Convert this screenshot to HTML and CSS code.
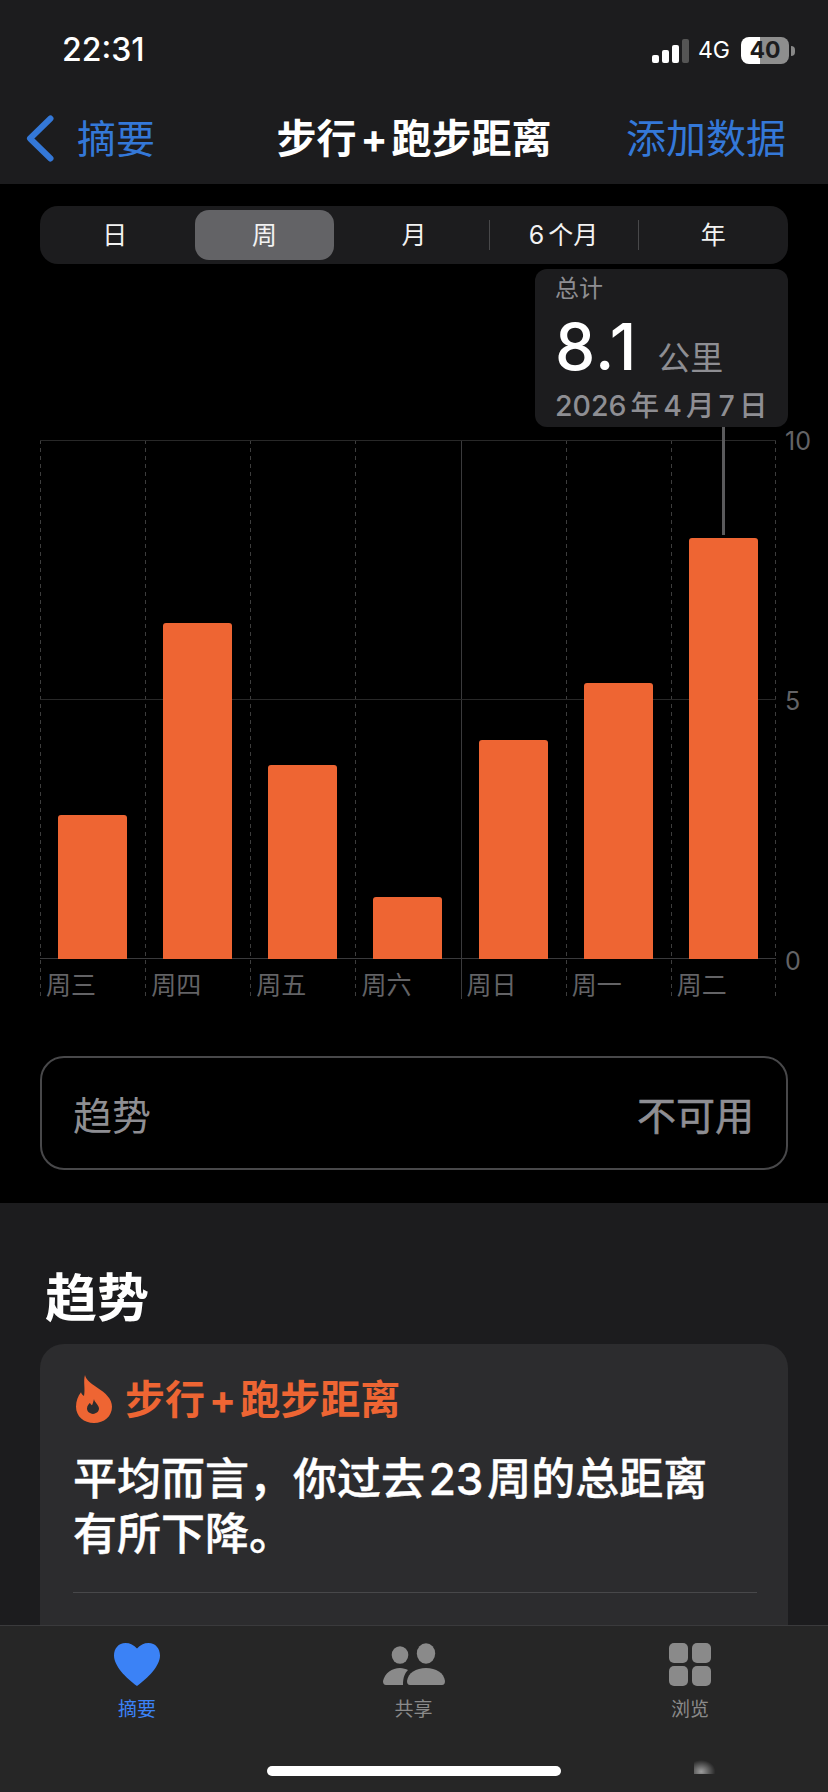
FILE: index.html
```html
<!DOCTYPE html>
<html>
<head>
    <title>步行+跑步距离</title>
    <link rel="stylesheet" href="styles.css">
</head>
<body>
    <div class="phone">
        <div class="top-bar">
            <div class="status">
                <span class="time">22:31</span>
                <div class="status-right">
                    <div class="signal">
                        <span class="sig sig-1"></span>
                        <span class="sig sig-2"></span>
                        <span class="sig sig-3"></span>
                        <span class="sig sig-4"></span>
                    </div>
                    <span class="network">4G</span>
                    <span class="battery">40</span>
                </div>
            </div>
            <div class="nav">
                <div class="nav-back">
                    <svg class="chevron" width="28" height="47" viewBox="0 0 28 47"><polyline points="24.5,3.5 4,23.5 24.5,43.5" fill="none" stroke="#3478d8" stroke-width="6" stroke-linecap="round" stroke-linejoin="round"/></svg>
                    <span class="nav-text">摘要</span>
                </div>
                <div class="nav-title nav-text">步行<span class="plus">+</span>跑步距离</div>
                <div class="nav-action nav-text">添加数据</div>
            </div>
        </div>

        <div class="chart-section">
            <div class="segment">
                <div class="seg-item">日</div>
                <div class="seg-item selected">周</div>
                <div class="seg-item">月</div>
                <div class="seg-sep"></div>
                <div class="seg-item">6 个月</div>
                <div class="seg-sep"></div>
                <div class="seg-item">年</div>
            </div>

            <div class="chart">
                <div class="days">
                    <div class="day"><div class="plot"><div class="bar" style="height: 27.7%"></div></div><div class="day-label">周三</div></div>
                    <div class="day"><div class="plot"><div class="bar" style="height: 64.7%"></div></div><div class="day-label">周四</div></div>
                    <div class="day"><div class="plot"><div class="bar" style="height: 37.4%"></div></div><div class="day-label">周五</div></div>
                    <div class="day"><div class="plot"><div class="bar" style="height: 11.9%"></div></div><div class="day-label">周六</div></div>
                    <div class="day day-sun"><div class="plot"><div class="bar" style="height: 42.2%"></div></div><div class="day-label">周日</div></div>
                    <div class="day"><div class="plot"><div class="bar" style="height: 53.2%"></div></div><div class="day-label">周一</div></div>
                    <div class="day"><div class="plot"><div class="bar" style="height: 81.1%"></div></div><div class="day-label">周二</div></div>
                </div>
                <div class="axis">
                    <span>10</span>
                    <span>5</span>
                    <span>0</span>
                </div>
                <div class="tooltip">
                    <div class="tip-label">总计</div>
                    <div class="tip-value"><span class="tip-num">8.1</span><span class="tip-unit">公里</span></div>
                    <div class="tip-date">2026 年 4 月 7 日</div>
                </div>
                <div class="tip-line"></div>
            </div>

            <div class="trend-box">
                <span>趋势</span>
                <span class="trend-value">不可用</span>
            </div>
        </div>

        <div class="trends">
            <h2>趋势</h2>
            <div class="card">
                <div class="card-head">
                    <svg width="36" height="48" viewBox="0 0 36 50" preserveAspectRatio="none"><path fill="#ee6533" fill-rule="evenodd" d="M9 0C10 5 14 8 21 13C30 19 36 25 36 33C36 43 28 50 18 50C8 50 0 43 0 33C0 27 2 22 5 18C5.5 20 6.5 21 8 22C9.5 14 7 7 9 0ZM18 25C18 28 23 31 23 35C23 38 20.5 40.5 17 40.5C13.5 40.5 11 38 11 35C11 32 13 30.5 14 29C14.5 30.5 15 31 16 31.5C17 29.5 17.5 27 18 25Z"/></svg>
                    <span class="card-title">步行<span class="plus">+</span>跑步距离</span>
                </div>
                <p class="card-text">平均而言，你过去 23 周的总距离<br>有所下降。</p>
                <div class="card-line"></div>
            </div>
        </div>

        <div class="tab-bar">
            <div class="tabs">
                <div class="tab active">
                    <svg width="46" height="44" viewBox="0 0 46 44"><path fill="#3b82f6" d="M23 5.5C20 2 16 0 11.5 0C4.5 0 0 5.5 0 12.5C0 23 12 35 23 43C34 35 46 23 46 12.5C46 5.5 41.5 0 34.5 0C30 0 26 2 23 5.5Z"/></svg>
                    <span>摘要</span>
                </div>
                <div class="tab">
                    <svg width="62" height="44" viewBox="0 0 62 44"><g fill="#8a8a8a"><ellipse cx="17" cy="12" rx="8.3" ry="8.8"/><ellipse cx="43" cy="10.5" rx="9.2" ry="10.3"/><path d="M0 38C2 30 9 25 17 25C20 25 23 26 25 27C22 30 20 34 20 42L3 42Q0 42 0 38Z"/><path d="M24 38C25 30 33 25 43 25C53 25 61 30 62 38Q62 42 59 42L27 42Q24 42 24 38Z"/></g></svg>
                    <span>共享</span>
                </div>
                <div class="tab">
                    <svg width="42" height="44" viewBox="0 0 42 44"><g fill="#8a8a8a"><rect x="0" y="0" width="19" height="20" rx="5"/><rect x="23" y="0" width="19" height="20" rx="5"/><rect x="0" y="23" width="19" height="20" rx="5"/><rect x="23" y="23" width="19" height="20" rx="5"/></g></svg>
                    <span>浏览</span>
                </div>
            </div>
            <div class="home-bar"></div>
            <div class="smudge"></div>
        </div>
    </div>
</body>
</html>
```

FILE: styles.css
```css
body {
    margin: 0;
    background: #000;
    font-family: "Inter", "Noto Sans CJK SC", sans-serif;
    color: #fff;
}
.phone {
    position: relative;
    width: 828px;
    height: 1792px;
    overflow: hidden;
    background: #000;
}
.top-bar {
    height: 184px;
    background: #1c1c1e;
}
.status {
    display: flex;
    justify-content: space-between;
    align-items: center;
    height: 40px;
    padding: 30px 33px 22px 62px;
}
.time {
    margin-top: -2px;
    font-size: 32px;
    font-weight: 500;
}
.status-right {
    display: flex;
    align-items: center;
}
.signal {
    display: flex;
    align-items: flex-end;
    gap: 3px;
    height: 24px;
    margin-top: 1px;
}
.sig {
    width: 7px;
    background: #fff;
    border-radius: 2px;
}
.sig-1 { height: 8px; }
.sig-2 { height: 13px; }
.sig-3 { height: 18px; }
.sig-4 { height: 24px; background: #555; }
.network {
    font-size: 23px;
    margin-left: 9px;
}
.battery {
    position: relative;
    width: 48px;
    height: 27px;
    margin: 0 6px 0 11px;
    border-radius: 8px;
    background: linear-gradient(to right, #fff 19px, #8e8e8e 19px);
    color: #1c1c1e;
    font-size: 23px;
    font-weight: 700;
    line-height: 27px;
    text-align: center;
}
.battery::after {
    content: "";
    position: absolute;
    top: 9px;
    right: -6px;
    width: 4px;
    height: 10px;
    background: #888;
    border-radius: 0 4px 4px 0;
}
.nav {
    display: grid;
    grid-template-columns: 1fr auto 1fr;
    align-items: center;
    height: 92px;
    font-size: 40px;
}
.nav-text {
    margin-top: -5px;
}
.nav-back {
    display: flex;
    align-items: center;
    gap: 23px;
    padding-left: 26px;
    font-size: 39px;
    color: #3478d8;
}
.nav-title {
    font-weight: 700;
    white-space: nowrap;
}
.plus {
    margin: 0 4px;
}
.nav-action {
    justify-self: end;
    padding-right: 42px;
    color: #3478d8;
}
.chart-section {
    padding: 22px 40px 33px;
}
.segment {
    display: flex;
    align-items: center;
    height: 58px;
    background: #1c1c1e;
    border-radius: 18px;
}
.seg-item {
    width: 149.6px;
    height: 50px;
    font-size: 25px;
    line-height: 50px;
    text-align: center;
    word-spacing: -3px;
    color: #f2f2f2;
}
.seg-item.selected {
    width: 139.6px;
    margin: 0 5px;
    background: #636366;
    border-radius: 14px;
}
.seg-sep {
    width: 1px;
    height: 30px;
    margin-right: -1px;
    background: #48484a;
}
.chart {
    position: relative;
    display: flex;
    margin-top: 176px;
}
.days {
    display: grid;
    grid-template-columns: repeat(7, 1fr);
    width: 736px;
    flex-shrink: 0;
    background: repeating-linear-gradient(to bottom, #3d3d3d 0 4px, transparent 4px 8px) right top / 1px 100% no-repeat;
}
.day {
    height: 559px;
    background: repeating-linear-gradient(to bottom, #3d3d3d 0 4px, transparent 4px 8px) left top / 1px 100% no-repeat;
}
.day-sun {
    background: linear-gradient(#3a3a3c, #3a3a3c) left top / 1px 100% no-repeat;
}
.plot {
    display: flex;
    justify-content: center;
    align-items: flex-end;
    height: 519px;
    background:
        linear-gradient(#282828, #282828) left top / 100% 1px no-repeat,
        linear-gradient(#282828, #282828) left center / 100% 1px no-repeat,
        linear-gradient(#3a3a3c, #3a3a3c) left bottom / 100% 1px no-repeat;
}
.bar {
    width: 69px;
    background: #ee6533;
    border-radius: 3px 3px 0 0;
}
.day-label {
    height: 40px;
    padding-left: 6px;
    font-size: 25px;
    line-height: 52px;
    color: #636366;
}
.axis {
    display: flex;
    flex-direction: column;
    justify-content: space-between;
    height: 548px;
    margin-top: -13px;
    padding-left: 9px;
    font-size: 25px;
    line-height: 28px;
    color: #636366;
}
.tooltip {
    position: absolute;
    top: -171px;
    left: 495px;
    box-sizing: border-box;
    width: 253px;
    height: 158px;
    padding: 4px 20px;
    background: #1c1c1e;
    border-radius: 12px;
}
.tip-label {
    font-size: 24px;
    line-height: 32px;
    color: #8e8e93;
}
.tip-value {
    display: flex;
    align-items: baseline;
    gap: 20px;
    height: 70px;
    margin-top: 7px;
    line-height: 70px;
}
.tip-num {
    font-size: 64px;
    font-weight: 500;
    letter-spacing: 1px;
}
.tip-unit {
    font-size: 33px;
    color: #8e8e93;
}
.tip-date {
    margin-top: 6px;
    font-size: 28.5px;
    font-weight: 500;
    line-height: 36px;
    word-spacing: -3.5px;
    white-space: nowrap;
    color: #8e8e93;
}
.tip-line {
    position: absolute;
    top: -13px;
    left: 682px;
    width: 3px;
    height: 108px;
    background: #5a5a5c;
}
.trend-box {
    display: flex;
    justify-content: space-between;
    align-items: center;
    box-sizing: border-box;
    height: 114px;
    margin-top: 57px;
    padding: 0 32px 0 31px;
    border: 2px solid #48484a;
    border-radius: 24px;
    font-size: 39px;
    color: #8e8e93;
}
.trend-value {
    -webkit-text-stroke: 0.6px #8e8e93;
}
.trends {
    height: 600px;
    padding: 66px 40px 0;
    background: #1c1c1e;
}
.trends h2 {
    margin: 0 0 15px 5px;
    font-size: 52px;
    font-weight: 700;
    line-height: 60px;
}
.card {
    padding: 30px 31px 0 33px;
    height: 400px;
    background: #2c2c2e;
    border-radius: 24px;
}
.card-head {
    display: flex;
    align-items: center;
    gap: 13px;
    height: 50px;
    padding-left: 3px;
    font-size: 40px;
    font-weight: 700;
    color: #ee6533;
}
.card-title {
    margin-top: -5px;
}
.card-text {
    margin: 28px 0 0;
    font-size: 44px;
    font-weight: 500;
    line-height: 55px;
    word-spacing: -8px;
    white-space: nowrap;
    -webkit-text-stroke: 0.4px #fff;
}
.card-line {
    height: 1px;
    margin-top: 30px;
    background: #48484a;
}
.tab-bar {
    position: absolute;
    left: 0;
    right: 0;
    bottom: 0;
    box-sizing: border-box;
    height: 167px;
    padding-top: 17px;
    background: #262626;
    border-top: 1px solid #3a3a3c;
}
.tabs {
    display: flex;
    justify-content: space-between;
    padding: 0 68px 0 67px;
}
.tab {
    display: flex;
    flex-direction: column;
    align-items: center;
    width: 140px;
    gap: 9px;
    font-size: 19px;
    line-height: 28px;
    color: #8a8a8a;
}
.tab.active {
    color: #3b82f6;
}
.tab svg {
    display: block;
}
.home-bar {
    width: 294px;
    height: 10px;
    margin: 42px auto 0;
    background: #fff;
    border-radius: 5px;
}
.smudge {
    position: absolute;
    left: 694px;
    top: 132px;
    width: 24px;
    height: 16px;
    background: radial-gradient(ellipse at 30% 85%, rgba(255, 255, 255, 0.55), rgba(255, 255, 255, 0) 60%);
}
```
